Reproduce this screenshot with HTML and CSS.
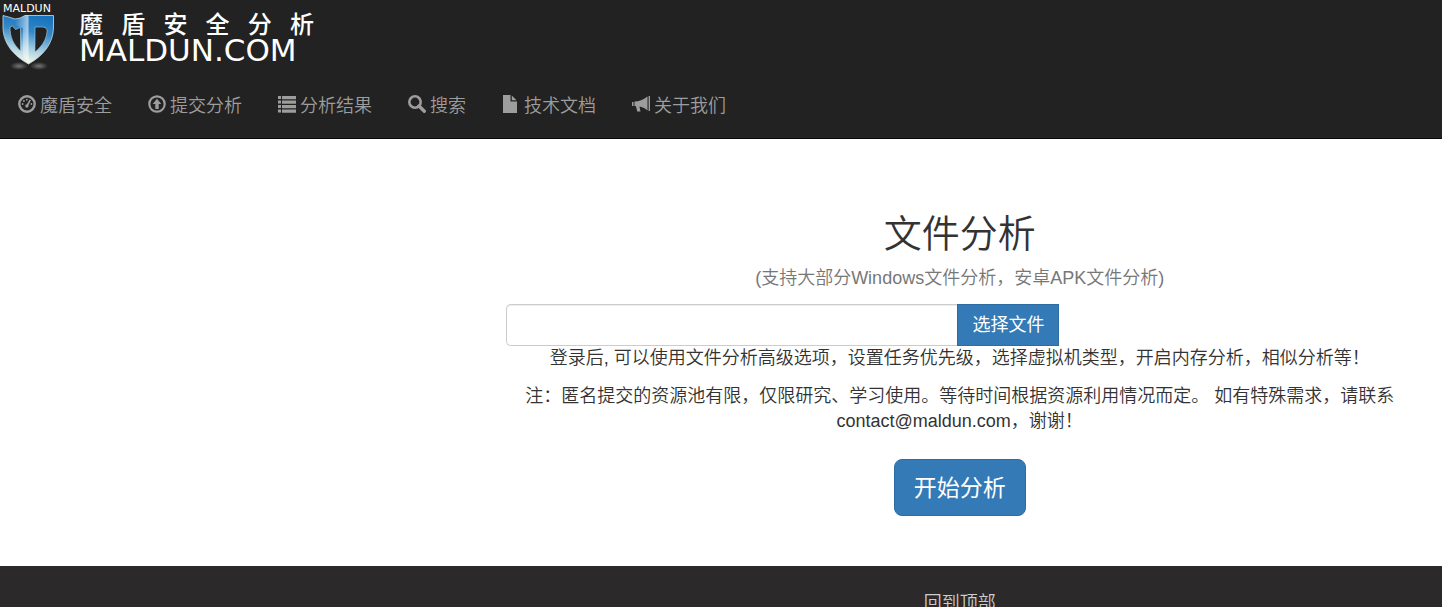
FILE: index.html
```html
<!DOCTYPE html>
<html lang="zh-CN">
<head>
    <meta charset="UTF-8">
    <meta name="viewport" content="width=device-width, initial-scale=1.0">
    <title>魔盾安全分析</title>
    <link rel="stylesheet" href="styles.css">
</head>
<body>
    <header class="navbar" id="top">
        <a href="#" class="brand">
            <svg class="brand-shield" viewBox="0 0 58 76" aria-hidden="true">
                <defs>
                    <linearGradient id="shield" x1="0.7" y1="0" x2="0.5" y2="1">
                        <stop offset="0" stop-color="#1672bd"/>
                        <stop offset="0.35" stop-color="#3389c8"/>
                        <stop offset="0.7" stop-color="#a5cfe3"/>
                        <stop offset="1" stop-color="#fbfbe6"/>
                    </linearGradient>
                    <linearGradient id="stem" x1="0" y1="0" x2="1" y2="0">
                        <stop offset="0" stop-color="#fff" stop-opacity="0"/>
                        <stop offset="1" stop-color="#fff" stop-opacity="0.6"/>
                    </linearGradient>
                    <radialGradient id="glow">
                        <stop offset="0" stop-color="#999" stop-opacity="0.7"/>
                        <stop offset="1" stop-color="#999" stop-opacity="0"/>
                    </radialGradient>
                </defs>
                <ellipse cx="19" cy="66" rx="9" ry="4" fill="url(#glow)"/>
                <ellipse cx="39" cy="66" rx="9" ry="4" fill="url(#glow)"/>
                <text x="3" y="12" class="shield-text">MALDUN</text>
                <path d="M3 15.500 Q9 17 15 19 Q20 19 25 15.500 H53.500 V28 C53 44 43 56 28.500 64 C14 56 3.500 44 3 28 Z" fill="url(#shield)" stroke="#c8dce8" stroke-width="0.800"/>
                <path d="M15 20 Q20 19 25 15.500 H28.500 V62 L23 56 V28 L15 25 Z" fill="url(#stem)"/>
                <path d="M10 27 L12.500 26 L15.500 29.500 L20.500 27.500 V51 C13 44 10 37 10 27 Z" fill="#222" stroke="#a8cde2" stroke-width="0.600"/>
                <path d="M35 27 H39 C44 27 47.500 27 47 32 C46 41 41 47 35 52 Z" fill="#222" stroke="#a8cde2" stroke-width="0.600"/>
            </svg>
            <span class="brand-name">
                <span class="brand-cn">魔 盾 安 全 分 析</span>
                <span class="brand-en">MALDUN.COM</span>
            </span>
        </a>
        <nav class="menu">
            <a href="#">
                <svg class="icon" viewBox="0 0 18 18" aria-hidden="true">
                    <circle cx="9" cy="9" r="7.700" fill="none" stroke="currentColor" stroke-width="2.400"/>
                    <circle cx="4.600" cy="9" r="0.900"/><circle cx="5.900" cy="6" r="0.900"/><circle cx="8.800" cy="4.700" r="0.900"/><circle cx="13.400" cy="9" r="0.900"/>
                    <path d="M11.600 4.500 L12.900 5.200 L10.500 10.300 A1.700 1.700 0 1 1 8.900 9.200 Z"/>
                </svg>
                <span>魔盾安全</span>
            </a>
            <a href="#">
                <svg class="icon" viewBox="0 0 18 18" aria-hidden="true">
                    <circle cx="9" cy="9" r="7.700" fill="none" stroke="currentColor" stroke-width="2.200"/>
                    <path d="M9 3.800 L13.300 9 H10.700 V14 H7.300 V9 H4.700 Z"/>
                </svg>
                <span>提交分析</span>
            </a>
            <a href="#">
                <svg class="icon" viewBox="0 0 18 18" aria-hidden="true">
                    <path d="M0 1h3v3H0z M4 1h14v3.200H4z M0 5.500h3v3H0z M4 5.500h14v3.200H4z M0 10h3v3H0z M4 10h14v3.200H4z M0 14.500h3v3H0z M4 14.500h14v3.200H4z"/>
                </svg>
                <span>分析结果</span>
            </a>
            <a href="#">
                <svg class="icon" viewBox="0 0 18 18" aria-hidden="true">
                    <circle cx="7" cy="7" r="5.700" fill="none" stroke="currentColor" stroke-width="2.600"/>
                    <path d="M11 11 L16.300 16.300" stroke="currentColor" stroke-width="3.400" stroke-linecap="round"/>
                </svg>
                <span>搜索</span>
            </a>
            <a href="#">
                <svg class="icon" viewBox="0 0 18 18" aria-hidden="true">
                    <path d="M1 0h7.500v6.500H15V18H1z M9.800 0.500L14.600 5.200H9.800z"/>
                </svg>
                <span>技术文档</span>
            </a>
            <a href="#">
                <svg class="icon" viewBox="0 0 18 18" aria-hidden="true">
                    <path d="M0 7h1.500v4H0z M2.500 6.500C7 6.500 11 5 15.500 1.500V15.500C12.500 13 10 12 7.500 11.600L8.500 16.500H5.200L4 11.200L2.500 11z M16.600 1H18V16H16.600z"/>
                </svg>
                <span>关于我们</span>
            </a>
        </nav>
    </header>

    <main class="content">
        <h1>文件分析</h1>
        <p class="subtitle">(支持大部分Windows文件分析，安卓APK文件分析)</p>
        <form>
            <div class="input-group">
                <input type="text" class="file-name" aria-label="文件" readonly>
                <button type="button" class="btn btn-file">选择文件</button>
            </div>
            <p>登录后, 可以使用文件分析高级选项，设置任务优先级，选择虚拟机类型，开启内存分析，相似分析等！</p>
            <p>注：匿名提交的资源池有限，仅限研究、学习使用。等待时间根据资源利用情况而定。 如有特殊需求，请联系contact@maldun.com，谢谢！</p>
            <button type="submit" class="btn btn-start">开始分析</button>
        </form>
    </main>

    <footer class="footer">
        <a href="#top">回到顶部</a>
    </footer>
</body>
</html>
```
FILE: styles.css
```css
* {
    box-sizing: border-box;
}
body {
    margin: 0;
    font-family: "Liberation Sans", "Noto Sans CJK SC", sans-serif;
    font-size: 18px;
    font-weight: 350;
    line-height: 25px;
    color: #333;
    background-color: #fff;
}
a {
    text-decoration: none;
}
.navbar {
    background-color: #222;
    border-bottom: 1px solid #080808;
}
.brand {
    display: flex;
    gap: 21px;
    color: #fff;
}
.brand-shield {
    width: 58px;
    height: 76px;
}
.shield-text {
    font-family: "DejaVu Sans", sans-serif;
    font-size: 11px;
    font-weight: 400;
    fill: #fff;
}
.brand-name {
    width: 235px;
    padding-top: 13px;
}
.brand-cn {
    display: block;
    font-size: 24px;
    font-weight: 500;
    line-height: 24px;
    text-align-last: justify;
}
.brand-en {
    display: block;
    font-family: "DejaVu Sans", sans-serif;
    font-size: 31px;
    font-weight: 400;
    line-height: 26px;
}
.menu {
    display: flex;
    flex-wrap: wrap;
    gap: 36px;
    padding: 16px 18px 19px;
}
.menu a {
    display: flex;
    align-items: flex-start;
    gap: 4px;
    color: #9d9d9d;
}
.menu span {
    padding-top: 2px;
}
.icon {
    width: 18px;
    height: 18px;
    margin-top: 3px;
    fill: currentColor;
}
.content {
    margin: 0 2% 0 35.1%;
    padding: 74px 0 50px;
    text-align: center;
}
h1 {
    margin: 0 0 11px;
    font-size: 38px;
    font-weight: 350;
    line-height: 42px;
}
p {
    margin: 0 0 13px;
}
.subtitle {
    color: #777;
}
.input-group {
    display: flex;
    width: 61%;
}
.file-name {
    flex: 1;
    min-width: 0;
    height: 42px;
    padding: 8px 15px;
    border: 1px solid #ccc;
    border-right: 0;
    border-radius: 5px 0 0 5px;
    box-shadow: inset 0 1px 1px rgba(0,0,0,0.075);
    font-size: 18px;
}
.btn {
    border: 1px solid #2e6da4;
    background-color: #337ab7;
    color: #fff;
    font-family: inherit;
    font-weight: 400;
    cursor: pointer;
}
.btn:hover {
    background-color: #286090;
}
.btn-file {
    padding: 0 14px 4px;
    font-size: 18px;
}
.btn-start {
    margin-top: 12px;
    height: 57px;
    padding: 0 19px 4px;
    border-radius: 8px;
    font-size: 23px;
}
.footer {
    padding: 25px 2% 24px 35.1%;
    background-color: #2b2929;
    text-align: center;
}
.footer a {
    color: #ccc;
}
```
